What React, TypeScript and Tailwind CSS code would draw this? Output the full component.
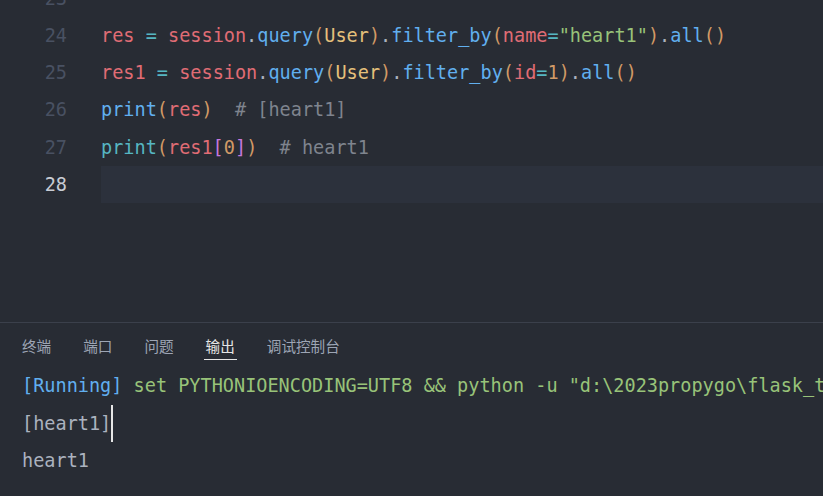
import React from "react";

type Tok = [string, string];

const C = {
  red: "text-[#e06c75]",
  cyan: "text-[#56b6c2]",
  blue: "text-[#61afef]",
  orange: "text-[#d19a66]",
  yellow: "text-[#e5c07b]",
  green: "text-[#98c379]",
  white: "text-[#abb2bf]",
  comment: "text-[#7f848e]",
  magenta: "text-[#c678dd]",
};

const lines: { n: number; toks: Tok[] }[] = [
  { n: 23, toks: [] },
  {
    n: 24,
    toks: [
      ["res", C.red],
      [" ", C.white],
      ["=", C.cyan],
      [" ", C.white],
      ["session", C.red],
      [".", C.white],
      ["query", C.blue],
      ["(", C.orange],
      ["User", C.yellow],
      [")", C.orange],
      [".", C.white],
      ["filter_by", C.blue],
      ["(", C.orange],
      ["name", C.red],
      ["=", C.cyan],
      ['"heart1"', C.green],
      [")", C.orange],
      [".", C.white],
      ["all", C.blue],
      ["()", C.orange],
    ],
  },
  {
    n: 25,
    toks: [
      ["res1", C.red],
      [" ", C.white],
      ["=", C.cyan],
      [" ", C.white],
      ["session", C.red],
      [".", C.white],
      ["query", C.blue],
      ["(", C.orange],
      ["User", C.yellow],
      [")", C.orange],
      [".", C.white],
      ["filter_by", C.blue],
      ["(", C.orange],
      ["id", C.red],
      ["=", C.cyan],
      ["1", C.orange],
      [")", C.orange],
      [".", C.white],
      ["all", C.blue],
      ["()", C.orange],
    ],
  },
  {
    n: 26,
    toks: [
      ["print", C.blue],
      ["(", C.orange],
      ["res", C.red],
      [")", C.orange],
      ["  # [heart1]", C.comment],
    ],
  },
  {
    n: 27,
    toks: [
      ["print", C.cyan],
      ["(", C.orange],
      ["res1", C.red],
      ["[", C.magenta],
      ["0", C.orange],
      ["]", C.magenta],
      [")", C.orange],
      ["  # heart1", C.comment],
    ],
  },
  { n: 28, toks: [] },
];

const mono = { fontFamily: '"DejaVu Sans Mono", "Liberation Mono", monospace' };

export default function App() {
  const tabs = ["终端", "端口", "问题", "输出", "调试控制台"];
  return (
    <div className="w-[823px] h-[496px] overflow-hidden bg-[#282c34] flex flex-col">
      <div className="h-[323px] shrink-0 overflow-hidden border-b border-[#3b404b]">
        <div className="-mt-[20.5px] text-[18.55px] leading-[37.3px]" style={mono}>
          {lines.map((l) => {
            const cur = l.n === 28;
            return (
              <div key={l.n} className="flex h-[37.3px]">
                <div
                  className={`w-[67px] shrink-0 text-right ${cur ? "text-[#c8ccd4]" : "text-[#495162]"}`}
                >
                  {l.n}
                </div>
                <div className="w-[34px] shrink-0" />
                <div className={`flex-1 whitespace-pre ${cur ? "bg-[#2c313c]" : ""}`}>
                  {l.toks.map((t, i) => (
                    <span key={i} className={t[1]}>
                      {t[0]}
                    </span>
                  ))}
                </div>
              </div>
            );
          })}
        </div>
      </div>
      <div className="flex-1 flex flex-col">
        <div
          className="flex pl-[20px] gap-[28px] text-[14.6px]"
          style={{ fontFamily: '"Noto Sans CJK SC", "Noto Sans", sans-serif' }}
        >
          {tabs.map((t) => {
            const act = t === "输出";
            return (
              <div
                key={t}
                className={`h-[37px] pt-[10px] px-[2px] flex items-center border-b ${
                  act ? "text-[#e6e6e6] border-[#e6e6e6]" : "text-[#9da5b4] border-transparent"
                }`}
              >
                {t}
              </div>
            );
          })}
        </div>
        <div className="pt-[7px] pl-[22px] text-[18.55px] leading-[37.5px] whitespace-pre" style={mono}>
          <div className="h-[37.5px]">
            <span className="text-[#61afef]">[Running]</span>
            <span className="text-[#98c379]">
              {' set PYTHONIOENCODING=UTF8 && python -u "d:\\2023propygo\\flask_test\\main.py"'}
            </span>
          </div>
          <div className="h-[37.5px] flex items-center">
            <span className="text-[#abb2bf]">[heart1]</span>
            <span className="inline-block w-[2px] h-[37px] bg-[#e6e6e6]" />
          </div>
          <div className="h-[37.5px] text-[#abb2bf]">heart1</div>
        </div>
      </div>
    </div>
  );
}
